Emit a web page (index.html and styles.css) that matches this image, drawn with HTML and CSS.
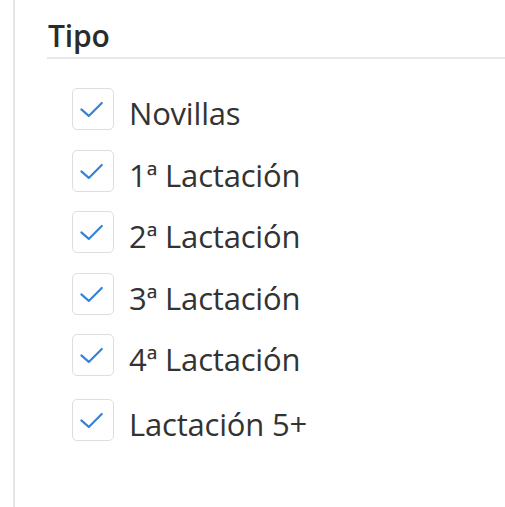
FILE: index.html
```html
<!DOCTYPE html>
<html lang="es">
<head>
    <meta charset="UTF-8">
    <meta name="viewport" content="width=device-width, initial-scale=1.0">
    <title>Tipo</title>
    <link rel="stylesheet" href="styles.css">
</head>
<body>
    <div class="panel">
        <h3 class="panel-title">Tipo</h3>
        <ul class="check-list">
            <li class="check-item">
                <span class="check-box"><svg viewBox="0 0 42 42"><path d="M9 22 L17 29 L31 15"/></svg></span>
                <span class="check-label">Novillas</span>
            </li>
            <li class="check-item">
                <span class="check-box"><svg viewBox="0 0 42 42"><path d="M9 22 L17 29 L31 15"/></svg></span>
                <span class="check-label">1ª Lactación</span>
            </li>
            <li class="check-item">
                <span class="check-box"><svg viewBox="0 0 42 42"><path d="M9 22 L17 29 L31 15"/></svg></span>
                <span class="check-label">2ª Lactación</span>
            </li>
            <li class="check-item">
                <span class="check-box"><svg viewBox="0 0 42 42"><path d="M9 22 L17 29 L31 15"/></svg></span>
                <span class="check-label">3ª Lactación</span>
            </li>
            <li class="check-item">
                <span class="check-box"><svg viewBox="0 0 42 42"><path d="M9 22 L17 29 L31 15"/></svg></span>
                <span class="check-label">4ª Lactación</span>
            </li>
            <li class="check-item last">
                <span class="check-box"><svg viewBox="0 0 42 42"><path d="M9 22 L17 29 L31 15"/></svg></span>
                <span class="check-label">Lactación 5+</span>
            </li>
        </ul>
    </div>
</body>
</html>
```

FILE: styles.css
```css
body {
    font-family: 'Open Sans', 'Noto Sans', sans-serif;
    background: #fff;
    color: #333;
    margin: 0;
    padding: 0;
}
.panel {
    margin-left: 13px;
    border-left: 2px solid #e6e6e6;
    min-height: 100vh;
    padding-left: 32px;
    padding-top: 18px;
    box-sizing: border-box;
}
.panel-title {
    margin: 0;
    font-size: 30px;
    font-weight: 600;
    line-height: 36px;
    padding-left: 1px;
    padding-bottom: 3px;
    border-bottom: 2px solid #e8e8e8;
    color: #2b2b2b;
    letter-spacing: -0.2px;
}
.check-list {
    list-style: none;
    margin: 0;
    padding: 29px 0 0 25px;
    display: flex;
    flex-direction: column;
    gap: 19.5px;
}
.check-item {
    display: flex;
    align-items: center;
    gap: 15px;
    height: 42px;
}
.check-item.last { margin-top: 3px; }
.check-box {
    width: 42px;
    height: 42px;
    box-sizing: border-box;
    border: 1.5px solid #dedede;
    border-radius: 5px;
    flex: none;
}
.check-box svg {
    display: block;
    width: 39px;
    height: 39px;
    fill: none;
    stroke: #3483d4;
    stroke-width: 2.3;
    stroke-linecap: round;
    stroke-linejoin: round;
}
.check-label {
    font-size: 31px;
    line-height: 34px;
    padding-top: 8px;
    color: #333;
    letter-spacing: -0.2px;
}
```
